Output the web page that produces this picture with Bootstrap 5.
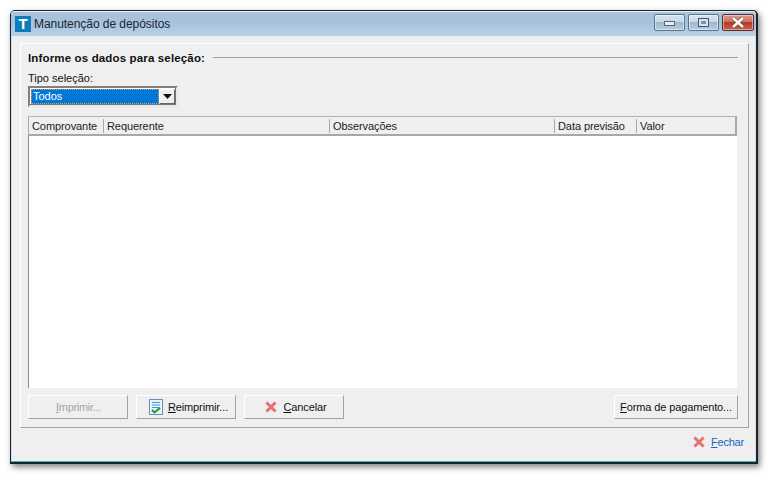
<!DOCTYPE html>
<html lang="pt">
<head>
<meta charset="utf-8">
<title>Manutenção de depósitos</title>
<link href="https://cdn.jsdelivr.net/npm/bootstrap@5.3.0/dist/css/bootstrap.min.css" rel="stylesheet">
<style>
html,body{height:100%;background:#fff;overflow:hidden}
body{font-family:"Liberation Sans",Arial,sans-serif;font-size:11px;line-height:14px;color:#111;padding:10px 14px 13px 10px}
.win{width:748px;height:454px;border:1px solid #1c2226;border-right-width:2px;border-bottom-width:2px;border-radius:5px 5px 0 0;box-shadow:2px 3px 6px rgba(0,0,0,.5);background:#cfe0ee;padding:0 1px 1px 1px;position:relative}
.win::after{content:"";position:absolute;left:0;right:0;bottom:0;height:1px;background:#2fb9d3}
.ttl{height:25px;background:linear-gradient(#a9c4dc,#a5c1db 40%,#b9d1e6);margin:0 -1px;padding:4px 0 0 4px;border-radius:4px 4px 0 0;border-top:1px solid #e6f0f8;gap:3px}
.tlogo{width:16px;height:16px;background:#0d7cb8;color:#fff;font-weight:700;font-size:15px;line-height:16px;text-align:center;flex:none}
.ttxt{font-size:12px;line-height:16px;color:#1b2630;letter-spacing:-.05px}
.wb{height:17px;width:31px;border:1px solid #5f7286;border-radius:2px;background:linear-gradient(#d9e5f0,#c6d8e8 45%,#9db9d2 50%,#b6cde0);box-shadow:inset 0 0 0 1px rgba(255,255,255,.45);display:flex;align-items:center;justify-content:center}
.wbx{width:32px;background:linear-gradient(#dc9a8c,#cf6f5e 45%,#b23a26 50%,#c9604d);border-color:#5a2a28}
.wbs{margin:-2px 2px 0 0;gap:3px}
.cli{height:426px;background:#efefef;padding:7px 6px 0 8px}
.grp{height:385px;border:1px solid;border-color:#fff #a0a0a0 #a0a0a0 #fff;padding:7px 10px 0 7px}
.gh{font-weight:700;font-size:11.5px;white-space:nowrap;height:14px;letter-spacing:.15px}
.gh::after{content:"";flex:1;height:1px;background:#a0a0a0;margin-left:8px}
.lbl{margin-top:6px;height:14px}
.cmb{width:150px;height:21px;margin-top:1px;border:2px solid #808080;border-right-color:#e8e8e8;border-bottom-color:#e8e8e8;box-shadow:inset -1px -1px 0 #777;background:#fff;padding:1px}
.cval{flex:1;background:#0078d7;color:#fff;border:1px dotted #e0a050;padding-left:1px;line-height:13px;height:15px}
.carr{width:16px;height:15px;background:#efefef;border:1px solid;border-color:#fff #666 #666 #fff;display:flex;align-items:center;justify-content:center}
.grid{width:709px;height:272px;margin-top:9px;background:#fff;border-left:1px solid #8a8a8a}
.ghd{height:20px;background:#efefef;border-top:1px solid #b4b4b4;border-bottom:2px solid #a8a8a8;border-right:2px solid #a8a8a8;margin-left:-1px;border-left:1px solid #a8a8a8;letter-spacing:-.08px}
.hc{padding:0 0 0 3px;border-right:1px solid #a8a8a8;height:14px;margin-top:2px;line-height:14px;white-space:nowrap;color:#222}
.btnrow{margin-top:7px}
.wbtn{height:24px;width:100px;background:#efefef;border:1px solid;border-color:#fff #a0a0a0 #a0a0a0 #fff;border-radius:0;padding:0;font-size:11px;line-height:14px;color:#111;display:flex;align-items:center;justify-content:center;gap:5px;letter-spacing:-.12px}
.wbtn:disabled{color:#a6a6a6;opacity:1;letter-spacing:-.3px;padding-left:1px}
.wbx2{gap:6px;padding-left:4px}
.wbr{padding-left:5px}
.wlong{width:124px}
.ftr{height:28px;padding:0 5px 0 0;gap:6px}
.lnk{color:#1564c0;text-decoration:none;letter-spacing:-.2px}
u{text-underline-offset:1px}
</style>
</head>
<body>
<div class="win d-flex flex-column">
  <div class="ttl d-flex align-items-start">
    <div class="tlogo">T</div>
    <div class="ttxt flex-grow-1 ms-0">Manutenção de depósitos</div>
    <div class="d-flex wbs">
      <div class="wb"><svg width="11" height="6"><rect x=".5" y="1.5" width="10" height="4" fill="#e8eef4" stroke="#55677a"/></svg></div>
      <div class="wb"><svg width="11" height="9"><rect x=".5" y=".5" width="10" height="8" fill="#d8e2ec" stroke="#465868"/><rect x="3" y="3" width="5" height="3" fill="#7e94aa"/></svg></div>
      <div class="wb wbx"><svg width="14" height="11" viewBox="0 0 14 11"><path d="M2 1l10 9M12 1L2 10" fill="none" stroke="#4b3a38" stroke-width="3.6"/><path d="M2 1l10 9M12 1L2 10" fill="none" stroke="#fff" stroke-width="2.6"/></svg></div>
    </div>
  </div>
  <div class="cli">
    <div class="grp">
      <div class="gh d-flex align-items-center">Informe os dados para seleção:</div>
      <div class="lbl">Tipo seleção:</div>
      <div class="cmb d-flex">
        <div class="cval">Todos</div>
        <div class="carr"><svg width="9" height="5"><path d="M0 0h9L4.5 5z" fill="#111"/></svg></div>
      </div>
      <div class="grid">
        <div class="ghd d-flex">
          <div class="hc" style="width:75px">Comprovante</div>
          <div class="hc" style="width:226px">Requerente</div>
          <div class="hc" style="width:225px">Observações</div>
          <div class="hc" style="width:82px">Data previsão</div>
          <div class="hc border-0">Valor</div>
        </div>
      </div>
      <div class="btnrow d-flex gap-2">
        <button class="wbtn" disabled><span><u>I</u>mprimir...</span></button>
        <button class="wbtn wbr">
          <svg width="14" height="16" viewBox="0 0 14 16"><rect x=".5" y=".5" width="13" height="15" fill="#eaf3fb" stroke="#6a8fc0"/><path d="M3 3.5h8M3 6h8M3 8.500h8" stroke="#3f9be0"/><path d="M3 11l2.500 2.500L11 9" fill="none" stroke="#1f9a2a" stroke-width="2"/></svg>
          <span><u>R</u>eimprimir...</span></button>
        <button class="wbtn wbx2">
          <svg width="12" height="12" viewBox="0 0 12 12"><path d="M2.500 2.500l7 7M9.500 2.500l-7 7" stroke="#e87070" stroke-width="3" stroke-linecap="square"/></svg>
          <span><u>C</u>ancelar</span></button>
        <button class="wbtn wlong ms-auto"><span><u>F</u>orma de pagamento...</span></button>
      </div>
    </div>
    <div class="ftr d-flex justify-content-end align-items-center">
      <svg width="12" height="12" viewBox="0 0 12 12"><path d="M2.500 2.500l7 7M9.500 2.500l-7 7" stroke="#e87070" stroke-width="3" stroke-linecap="square"/></svg>
      <a class="lnk" href="#"><u>F</u>echar</a>
    </div>
  </div>
</div>
</body>
</html>
